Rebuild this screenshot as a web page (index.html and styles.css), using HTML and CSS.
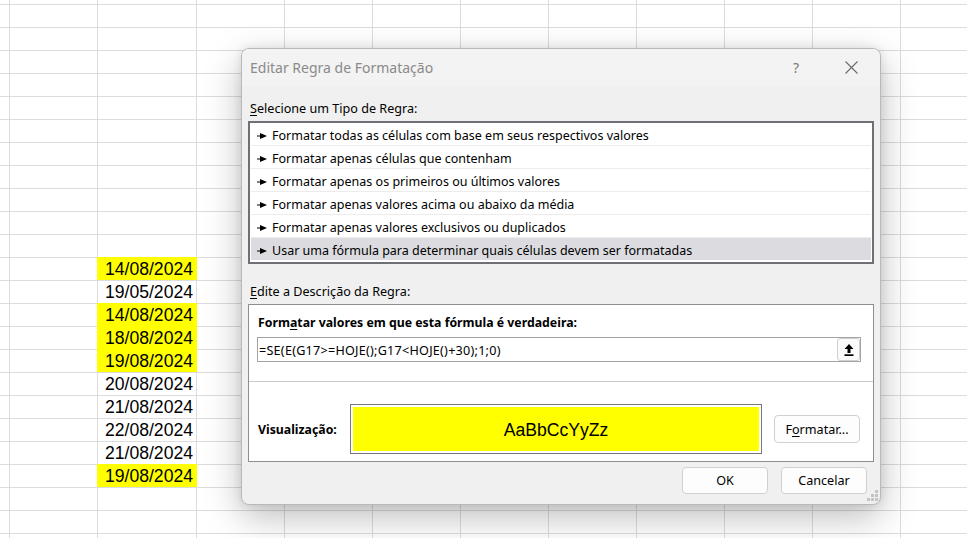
FILE: index.html
```html
<!DOCTYPE html>
<html lang="pt-BR">
<head>
<meta charset="utf-8">
<title>Editar Regra de Formatação</title>
<link rel="stylesheet" href="styles.css">
</head>
<body>
<div class="sheet">
  <div class="dates">
    <div class="cell hl">14/08/2024</div>
    <div class="cell">19/05/2024</div>
    <div class="cell hl">14/08/2024</div>
    <div class="cell hl">18/08/2024</div>
    <div class="cell hl">19/08/2024</div>
    <div class="cell">20/08/2024</div>
    <div class="cell">21/08/2024</div>
    <div class="cell">22/08/2024</div>
    <div class="cell">21/08/2024</div>
    <div class="cell hl">19/08/2024</div>
  </div>
</div>

<div class="dialog">
  <div class="titlebar">
    <span class="title">Editar Regra de Formatação</span>
    <span class="help">?</span>
    <svg class="close" width="13" height="13" viewBox="0 0 13 13"><path d="M0.5 0.5 L12.5 12.5 M12.5 0.5 L0.5 12.5" stroke="#6a6a6a" stroke-width="1.1" fill="none"/></svg>
  </div>
  <div class="body">
    <div class="label label-top"><u>S</u>elecione um Tipo de Regra:</div>
    <div class="listbox">
      <div class="item"><svg class="arrow" width="10" height="6" viewBox="0 0 10 6"><path d="M0 3 H4" stroke="#000" stroke-width="1.2"/><path d="M3 0 L10 3 L3 6 Z" fill="#000"/></svg>Formatar todas as células com base em seus respectivos valores</div>
      <div class="item"><svg class="arrow" width="10" height="6" viewBox="0 0 10 6"><path d="M0 3 H4" stroke="#000" stroke-width="1.2"/><path d="M3 0 L10 3 L3 6 Z" fill="#000"/></svg>Formatar apenas células que contenham</div>
      <div class="item"><svg class="arrow" width="10" height="6" viewBox="0 0 10 6"><path d="M0 3 H4" stroke="#000" stroke-width="1.2"/><path d="M3 0 L10 3 L3 6 Z" fill="#000"/></svg>Formatar apenas os primeiros ou últimos valores</div>
      <div class="item"><svg class="arrow" width="10" height="6" viewBox="0 0 10 6"><path d="M0 3 H4" stroke="#000" stroke-width="1.2"/><path d="M3 0 L10 3 L3 6 Z" fill="#000"/></svg>Formatar apenas valores acima ou abaixo da média</div>
      <div class="item"><svg class="arrow" width="10" height="6" viewBox="0 0 10 6"><path d="M0 3 H4" stroke="#000" stroke-width="1.2"/><path d="M3 0 L10 3 L3 6 Z" fill="#000"/></svg>Formatar apenas valores exclusivos ou duplicados</div>
      <div class="item selected"><svg class="arrow" width="10" height="6" viewBox="0 0 10 6"><path d="M0 3 H4" stroke="#000" stroke-width="1.2"/><path d="M3 0 L10 3 L3 6 Z" fill="#000"/></svg>Usar uma fórmula para determinar quais células devem ser formatadas</div>
    </div>
    <div class="label label-desc"><u>E</u>dite a Descrição da Regra:</div>
    <div class="panel">
      <div class="panel-top">
        <div class="bold">Form<u>a</u>tar valores em que esta fórmula é verdadeira:</div>
        <div class="input">
          <span class="formula">=SE(E(G17&gt;=HOJE();G17&lt;HOJE()+30);1;0)</span>
          <span class="refbtn"><svg width="10" height="12" viewBox="0 0 10 12"><path d="M5 0 L9.5 5 L6.5 5 L6.5 9 L3.5 9 L3.5 5 L0.5 5 Z" fill="#000"/><rect x="0.5" y="10.3" width="9" height="1.7" fill="#000"/></svg></span>
        </div>
      </div>
      <div class="panel-bottom">
        <div class="bold vis">Visualização:</div>
        <div class="preview"><div class="preview-inner">AaBbCcYyZz</div></div>
        <span class="btn">F<u>o</u>rmatar...</span>
      </div>
    </div>
    <div class="footer">
      <span class="btn">OK</span>
      <span class="btn">Cancelar</span>
    </div>
  </div>
  <svg class="grip" width="11" height="11" viewBox="0 0 11 11"><g fill="#c4c4c4"><rect x="8" y="0" width="3" height="3"/><rect x="4" y="4" width="3" height="3"/><rect x="8" y="4" width="3" height="3"/><rect x="0" y="8" width="3" height="3"/><rect x="4" y="8" width="3" height="3"/><rect x="8" y="8" width="3" height="3"/></g></svg>
</div>
</body>
</html>
```

FILE: styles.css
```css
* { box-sizing: border-box; }

html, body {
  margin: 0;
  padding: 0;
  width: 967px;
  height: 538px;
  overflow: hidden;
  background: #fff;
}

body {
  font-family: "Noto Sans", "Open Sans", sans-serif;
  color: #000;
}

/* ---------- spreadsheet ---------- */
.sheet {
  width: 967px;
  height: 538px;
  background-color: #fff;
  background-image:
    repeating-linear-gradient(to bottom, transparent 0, transparent 4px, #dcdcdc 4px, #dcdcdc 5px, transparent 5px, transparent 23px),
    linear-gradient(#dcdcdc, #dcdcdc),
    linear-gradient(#dcdcdc, #dcdcdc),
    repeating-linear-gradient(to right, #dcdcdc 0, #dcdcdc 1px, transparent 1px, transparent 88px);
  background-size: 100% 100%, 1px 100%, 1px 100%, 800px 100%;
  background-position: 0 0, 9px 0, 97px 0, 196px 0;
  background-repeat: no-repeat;
  padding-top: 257px;
  padding-left: 97px;
}

.dates {
  width: 100px;
  display: flex;
  flex-direction: column;
}

.cell {
  height: 23px;
  line-height: 25px;
  text-align: right;
  padding-right: 4px;
  font-family: "Liberation Sans", Arial, sans-serif;
  font-size: 17.6px;
  color: #000;
}

.cell.hl { background: #ffff00; }

/* ---------- dialog ---------- */
.dialog {
  position: absolute;
  left: 241px;
  top: 48px;
  width: 640px;
  height: 457px;
  background: #f0f0f0;
  border: 1px solid #b9b9b9;
  border-radius: 8px;
  box-shadow: 0 12px 36px rgba(0, 0, 0, 0.26), 0 0 10px rgba(0, 0, 0, 0.10);
  display: flex;
  flex-direction: column;
  overflow: hidden;
}

.titlebar {
  height: 37px;
  flex: none;
  background: #f3f3f3;
  display: flex;
  align-items: center;
  padding-left: 8px;
  padding-right: 22px;
}

.title {
  flex: 1;
  font-size: 14px;
  color: #8a8a8a;
}

.help {
  font-size: 14px;
  color: #7a7a7a;
  margin-right: 46px;
}

.close { display: block; }

.body {
  flex: 1;
  display: flex;
  flex-direction: column;
  padding: 0 6px;
}

.label {
  font-size: 12.6px;
  line-height: 18px;
  padding-left: 2px;
}

.label-top { margin-top: 14px; margin-bottom: 3px; }
.label-desc { margin-top: 19px; margin-bottom: 3px; }

u { text-decoration: underline; text-underline-offset: 2px; text-decoration-thickness: 1px; }

.listbox {
  height: 143px;
  background: #fff;
  border: 2px solid #6f6f76;
  padding: 0 1px 2px 1px;
  display: flex;
  flex-direction: column;
}

.item {
  height: 23px;
  border-bottom: 1px solid #ececec;
  display: flex;
  align-items: center;
  font-size: 12.5px;
  padding-left: 6px;
  padding-top: 3px;
  white-space: nowrap;
}

.item:last-child { border-bottom: none; height: 22px; }

.item.selected { background: #dcdce0; }

.arrow { margin-right: 5px; flex: none; margin-top: 1px; }

.panel {
  height: 158px;
  background: #fff;
  border: 1px solid #8e8e8e;
  display: flex;
  flex-direction: column;
}

.panel-top {
  height: 77px;
  flex: none;
  border-bottom: 1px solid #c9c9c9;
  padding: 9px 12px 0 8px;
}

.bold {
  font-size: 12.3px;
  font-weight: 700;
  line-height: 18px;
  padding-left: 1px;
}

.input {
  margin-top: 5px;
  height: 25px;
  border: 1px solid #a3a3a3;
  display: flex;
  align-items: center;
  justify-content: space-between;
  padding-left: 1px;
}

.formula {
  font-size: 12.6px;
  letter-spacing: 0.25px;
  white-space: nowrap;
  padding-top: 2px;
}

.refbtn {
  width: 23px;
  height: 23px;
  border: 1px solid #cfcfcf;
  border-radius: 3px;
  background: #fbfbfb;
  display: flex;
  align-items: center;
  justify-content: center;
}

.panel-bottom {
  flex: 1;
  display: flex;
  align-items: center;
  padding: 21px 13px 6px 8px;
}

.vis {
  width: 93px;
  flex: none;
  padding-top: 1px;
}

.preview {
  width: 412px;
  height: 50px;
  border: 1px solid #777;
  padding: 2px;
  background: #fff;
  flex: none;
}

.preview-inner {
  height: 100%;
  background: #ffff00;
  display: flex;
  align-items: center;
  justify-content: center;
  font-family: "Liberation Sans", Arial, sans-serif;
  font-size: 17.6px;
  padding-top: 2px;
}

.btn {
  width: 86px;
  height: 28px;
  border: 1px solid #d0d0d0;
  border-radius: 4px;
  background: #fdfdfd;
  display: flex;
  align-items: center;
  justify-content: center;
  font-size: 12.6px;
  flex: none;
}

.panel-bottom .btn { margin-left: 12px; }

.footer {
  display: flex;
  justify-content: flex-end;
  gap: 13px;
  margin-top: 5px;
  padding-right: 7px;
}

.footer .btn { height: 27px; }

.grip {
  position: absolute;
  right: 2px;
  bottom: 3px;
}
```
